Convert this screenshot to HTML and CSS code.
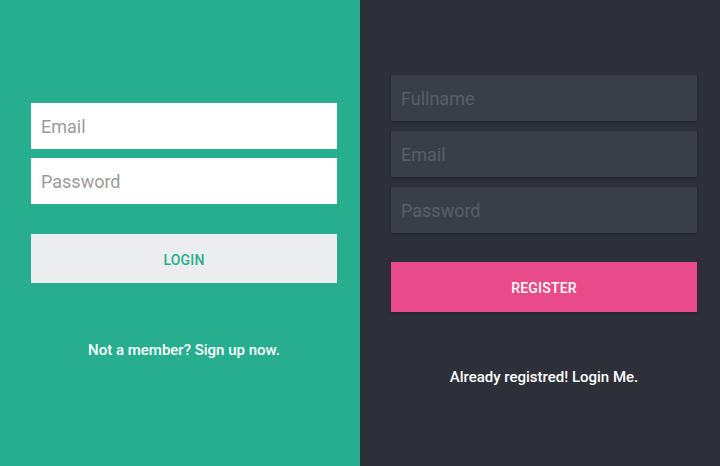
FILE: index.html
```html
<!DOCTYPE html>
<html>
<head>
<meta charset="utf-8">
<link rel="stylesheet" href="styles.css">
</head>
<body>
<div class="page">
  <section class="panel panel-login">
    <form class="form form-login">
      <input class="field field-light" type="text" placeholder="Email">
      <input class="field field-light" type="password" placeholder="Password">
      <button class="btn btn-login" type="button">LOGIN</button>
      <p class="note note-login">Not a member? Sign up now.</p>
    </form>
  </section>
  <section class="panel panel-register">
    <form class="form form-register">
      <input class="field field-dark" type="text" placeholder="Fullname">
      <input class="field field-dark" type="text" placeholder="Email">
      <input class="field field-dark" type="password" placeholder="Password">
      <button class="btn btn-register" type="button">REGISTER</button>
      <p class="note note-register">Already registred! Login Me.</p>
    </form>
  </section>
</div>
</body>
</html>
```

FILE: styles.css
```css
* { box-sizing: border-box; }
html, body { margin: 0; padding: 0; }
body {
  font-family: Roboto, "Liberation Sans", sans-serif;
  width: 720px;
  height: 466px;
  overflow: hidden;
}
.page {
  display: flex;
  width: 720px;
  height: 466px;
}
.panel {
  width: 360px;
  height: 466px;
  padding-left: 31px;
}
.panel-login {
  background: #26ae8f;
  padding-top: 103px;
}
.panel-register {
  background: #2d3039;
  padding-top: 75px;
}
.form {
  width: 306px;
  display: flex;
  flex-direction: column;
  margin: 0;
}
.form-login { gap: 9px; }
.form-register { gap: 10px; }
.field {
  display: block;
  width: 306px;
  height: 46px;
  border: 0;
  outline: 0;
  padding: 0 10px;
  font-family: Roboto, "Liberation Sans", sans-serif;
  font-size: 18px;
  margin: 0;
}
.field-light {
  background: #ffffff;
  color: #333;
}
.field-light::placeholder { color: #9b9b9b; }
.field-dark {
  background: #3a3e48;
  color: #ccc;
  box-shadow: 0 1px 2px rgba(0,0,0,0.35);
}
.field-dark::placeholder { color: #5a5e67; }
.btn {
  display: block;
  width: 306px;
  border: 0;
  font-family: Roboto, "Liberation Sans", sans-serif;
  font-size: 14px;
  font-weight: 500;
  letter-spacing: 0.2px;
  cursor: pointer;
  padding: 2px 0 0;
}
.btn-login {
  margin-top: 21px;
  height: 49px;
  background: #ecedef;
  color: #26ae8f;
}
.btn-register {
  margin-top: 19px;
  height: 50px;
  background: #e94b89;
  color: #ffffff;
  box-shadow: 0 1px 2px rgba(0,0,0,0.3);
}
.note {
  margin: 0;
  text-align: center;
  color: #ffffff;
  font-size: 15px;
  font-weight: 500;
  line-height: 20px;
}
.note-login { margin-top: 48px; }
.note-register { margin-top: 45px; }
```
